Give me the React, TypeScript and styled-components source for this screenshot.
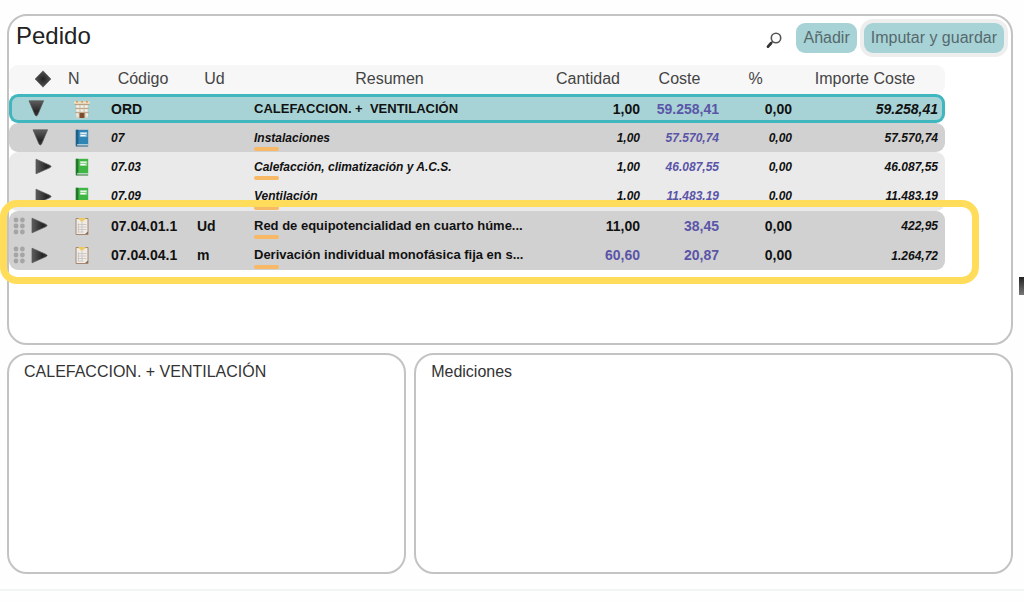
import React from "react";
import styled, { createGlobalStyle, css } from "styled-components";

const GlobalStyle = createGlobalStyle`
  * { box-sizing: border-box; }
  body {
    margin: 0;
    background: #fefefe;
    color: #333;
    font: 16px/20px "Liberation Sans", Arial, sans-serif;
  }
`;

const Page = styled.main`
  position: relative;
  display: flex;
  flex-direction: column;
  gap: 8px;
  padding: 14px 11px 15px 7px;
  border-bottom: 2px solid #f3f5f5;
  overflow: hidden;
`;

const Panel = styled.section`
  border: 2px solid #c3c3c3;
  border-radius: 20px;
  background: #fff;
`;

const OrderPanel = styled(Panel)`
  min-height: 331px;
`;

const DetailPanel = styled(Panel)`
  min-height: 221px;
  padding: 7px 15px;
`;

const Details = styled.div`
  display: grid;
  grid-template-columns: 2fr 3fr;
  gap: 8px;
`;

const DetailTitle = styled.h2`
  margin: 0;
  font-size: 16px;
  line-height: 20px;
  font-weight: 400;
`;

const Header = styled.header`
  display: flex;
  align-items: center;
  gap: 7px;
  height: 49px;
  padding: 0 7px 5px;
`;

const Title = styled.h1`
  flex: 1;
  margin: 0;
  padding-bottom: 4px;
  color: #222;
  font-size: 24px;
  line-height: 28px;
  font-weight: 400;
`;

const SearchButton = styled.button`
  display: flex;
  padding: 4px 7px 0 0;
  border: 0;
  background: none;
`;

const ActionButton = styled.button<{ $focused?: boolean }>`
  height: 30px;
  padding: 0 7px;
  border: 0;
  border-radius: 9px;
  background: #a7d3d6;
  color: #56696d;
  font: inherit;
  white-space: nowrap;
  ${(p) => p.$focused && css`box-shadow: 0 0 0 4px #eeeeee;`}
`;

const TableArea = styled.div`
  position: relative;
  margin-right: 66px;
`;

const Table = styled.table`
  width: 100%;
  table-layout: fixed;
  border-collapse: separate;
  border-spacing: 0;
`;

const Col = styled.col<{ $width?: number }>`
  width: ${(p) => (p.$width ? `${p.$width}px` : "auto")};
`;

const HeadCell = styled.th<{ $align?: string }>`
  height: 29px;
  padding: 0 0 2px;
  background: #f7f7f7;
  color: #444;
  font-weight: 400;
  line-height: 20px;
  text-align: ${(p) => p.$align ?? "center"};
  &:first-child { border-radius: 9px 0 0 9px; padding-left: 25px; }
  &:nth-child(2) { padding-left: 4px; }
  &:last-child { border-radius: 0 9px 9px 0; padding-right: 7px; }
`;

type Tone = "selected" | "dark" | "light";

const Group = styled.tbody<{ $tone: Tone }>`
  td { background: ${(p) => ({ selected: "#a7d3d6", dark: "#d1d1d1", light: "#eaeaea" })[p.$tone]}; }
  tr:nth-child(2) td { height: 30px; }
  tr:first-child td:first-child { border-top-left-radius: 9px; }
  tr:first-child td:last-child { border-top-right-radius: 9px; }
  tr:last-child td:first-child { border-bottom-left-radius: 9px; }
  tr:last-child td:last-child { border-bottom-right-radius: 9px; }
  ${(p) => p.$tone === "selected" && css`
    td { border: solid #40b6bf; border-width: 3px 0; }
    td:first-child { border-left-width: 3px; }
    td:last-child { border-right-width: 3px; }
  `}
`;

const Row = styled.tr<{ $chapter: boolean }>`
  color: #111;
  font-size: ${(p) => (p.$chapter ? 12 : 14)}px;
  font-style: ${(p) => (p.$chapter ? "italic" : "normal")};
  font-weight: 700;
  line-height: 16px;
`;

const Cell = styled.td`
  height: 29px;
  padding: 0 0 0 11px;
  white-space: pre;
`;

const TreeCell = styled(Cell)<{ $inset: number }>`
  padding-left: ${(p) => p.$inset}px;
`;

const TreeItems = styled.div`
  display: flex;
  align-items: center;
  gap: 6px;
`;

const IconCell = styled(Cell)`
  padding: 0;
  svg { display: block; margin: 0 auto; }
`;

const SummaryCell = styled(Cell)<{ $marked: boolean; $chapter: boolean }>`
  position: relative;
  overflow: hidden;
  text-overflow: ellipsis;
  font-size: ${(p) => (p.$chapter ? 12 : 13)}px;
  ${(p) => p.$marked && css`
    &::after {
      content: "";
      position: absolute;
      left: 11px;
      bottom: 1px;
      width: 25px;
      height: 4px;
      border-radius: 2px;
      background: #f8b966;
    }
  `}
`;

const NumberCell = styled(Cell)<{ $editable?: boolean }>`
  padding: 0;
  text-align: right;
  ${(p) => p.$editable && css`color: #5b55a8;`}
`;

const TotalCell = styled(NumberCell)<{ $inset: number }>`
  padding-right: ${(p) => p.$inset}px;
  font-style: italic;
`;

const SmallTotal = styled.span`
  font-size: 12px;
`;

const Highlight = styled.div`
  position: absolute;
  left: -9px;
  right: -34px;
  bottom: -14px;
  height: 84px;
  border: 7px solid #ffdd5a;
  border-radius: 17px;
  pointer-events: none;
`;

const EdgeHandle = styled.div`
  position: absolute;
  right: 0;
  top: 277px;
  width: 5px;
  height: 18px;
  background: linear-gradient(#222, #777);
`;

const Arrow = ({ open }: { open: boolean }) => (
  <svg width="17" height="17" viewBox="0 0 17 17">
    <defs>
      <linearGradient id={open ? "down" : "side"} x1="0" y1="0" x2={open ? 0 : 1} y2={open ? 1 : 0}>
        <stop offset="0" stopColor="#5e5e5e" />
        <stop offset="0.7" stopColor="#262626" />
        <stop offset="1" stopColor="#333" />
      </linearGradient>
    </defs>
    {open ? (
      <path d="M1 .8h14.6L9.6 15Q8.3 17 7 15Z" fill="url(#down)" stroke="#555" strokeWidth=".7" strokeLinejoin="round" />
    ) : (
      <path d="M1 1.2 15.2 7.4Q17 8.5 15.2 9.6L1 15.8Z" fill="url(#side)" stroke="#555" strokeWidth=".7" strokeLinejoin="round" />
    )}
  </svg>
);

const DiamondIcon = styled.svg`
  display: block;
`;

const Diamond = () => (
  <DiamondIcon width="18" height="18" viewBox="0 0 18 18">
    <defs>
      <radialGradient id="diamond">
        <stop offset="0" stopColor="#222" />
        <stop offset="1" stopColor="#555" />
      </radialGradient>
    </defs>
    <path d="M9 .8 17 9 9 17.2 1 9Z" fill="url(#diamond)" stroke="#555" strokeWidth=".5" strokeLinejoin="round" />
  </DiamondIcon>
);

const Grip = () => (
  <svg width="12" height="18" viewBox="0 0 12 18" fill="#a5a5a5">
    {[3, 9, 15].map((y) => (
      <React.Fragment key={y}>
        <circle cx="3" cy={y} r="2.4" />
        <circle cx="9.4" cy={y} r="2.4" />
      </React.Fragment>
    ))}
  </svg>
);

const Building = () => (
  <svg width="18" height="18" viewBox="0 0 18 18">
    <path d="M3 3h12v15H3z" fill="#d8d2c2" />
    <path d="M1 1.5h16v2.4H1z" fill="#eedfc2" />
    <path d="M3 1h2v1.6H3zM8 1h2v1.6H8zM13 1h2v1.6h-2z" fill="#d99a55" />
    <path d="M1.5 3.9h15v.9h-15z" fill="#b39778" />
    <path d="M2 8h14v.9H2zM2 12h14v.9H2z" fill="#bfa88c" />
    <path d="M3.5 5.5h2.5v2H3.5zM7.8 5.5h2.5v2H7.8zM12 5.5h2.5v2H12zM3.5 9.6h2.5v2H3.5zM7.8 9.6h2.5v2H7.8zM12 9.6h2.5v2H12z" fill="#f5f3ec" />
    <path d="M3.5 13.6h2v3h-2zM13 13.6h2v3h-2z" fill="#efece2" />
    <path d="M6.5 13h5v5h-5z" fill="#7d4c2c" />
  </svg>
);

const Book = ({ color, dark }: { color: string; dark: string }) => (
  <svg width="14" height="18" viewBox="0 0 14 18">
    <path d="M.8.8h12.4v15H.8z" fill={color} />
    <path d="M.8.8h2.6v16H.8z" fill={dark} />
    <path d="M4.8 3h7.4v5H4.8z" fill="#fff" opacity=".4" />
    <path d="M5.5 4.2h6M5.5 6.6h5" stroke="#fff" strokeWidth="1.1" />
    <path d="M2 15.3h11.2v1.4H2Z" fill="#d9e3e2" />
    <path d="M.8 17h12.4" stroke={dark} />
  </svg>
);

const Clipboard = () => (
  <svg width="14" height="18" viewBox="0 0 14 18">
    <path d="M1 1.5h12v16H1z" fill="#efece8" stroke="#a5886f" />
    <path d="M3.5 6.5v9M7 5v10.5M2.5 7.5h9M2.5 10h9M2.5 12.5h9M2.5 15h6" stroke="#c4c2c0" strokeWidth=".8" />
    <path d="M3.5 1h7v1.8H8.6v1.8H5.4V2.8H3.5z" fill="#ecc860" />
    <path d="M10 17h3v-2.5z" fill="#8b6b52" />
  </svg>
);

const Magnifier = () => (
  <svg width="16" height="17" viewBox="0 0 16 17" fill="none">
    <circle cx="10" cy="6" r="4.7" stroke="#555" strokeWidth="1.6" />
    <path d="M6.6 9.5 5 11" stroke="#444" strokeWidth="1.6" />
    <path d="M5 11.2 2 14.6" stroke="#333" strokeWidth="2.8" strokeLinecap="round" />
  </svg>
);

const icons = {
  building: <Building />,
  blueBook: <Book color="#2f86b5" dark="#1d5f86" />,
  greenBook: <Book color="#3fb543" dark="#24762c" />,
  clipboard: <Clipboard />,
};

type Item = {
  icon: keyof typeof icons;
  inset: number;
  open?: boolean;
  grip?: boolean;
  chapter?: boolean;
  code: string;
  unit?: string;
  summary: string;
  quantity: string;
  quantityEditable?: boolean;
  cost: string;
  total: string;
};

const groups: { tone: Tone; items: Item[] }[] = [
  {
    tone: "selected",
    items: [{ icon: "building", inset: 16, open: true, code: "ORD", summary: "CALEFACCION. +  VENTILACIÓN", quantity: "1,00", cost: "59.258,41", total: "59.258,41" }],
  },
  {
    tone: "dark",
    items: [{ icon: "blueBook", inset: 23, open: true, chapter: true, code: "07", summary: "Instalaciones", quantity: "1,00", cost: "57.570,74", total: "57.570,74" }],
  },
  {
    tone: "light",
    items: [
      { icon: "greenBook", inset: 26, chapter: true, code: "07.03", summary: "Calefacción, climatización y A.C.S.", quantity: "1,00", cost: "46.087,55", total: "46.087,55" },
      { icon: "greenBook", inset: 26, chapter: true, code: "07.09", summary: "Ventilación", quantity: "1,00", cost: "11.483,19", total: "11.483,19" },
    ],
  },
  {
    tone: "dark",
    items: [
      { icon: "clipboard", inset: 4, grip: true, code: "07.04.01.1", unit: "Ud", summary: "Red de equipotencialidad en cuarto húme...", quantity: "11,00", cost: "38,45", total: "422,95" },
      { icon: "clipboard", inset: 4, grip: true, code: "07.04.04.1", unit: "m", summary: "Derivación individual monofásica fija en s...", quantity: "60,60", quantityEditable: true, cost: "20,87", total: "1.264,72" },
    ],
  },
];

const ItemRow = ({ item, selected }: { item: Item; selected: boolean }) => (
  <Row $chapter={!!item.chapter}>
    <TreeCell $inset={item.inset}>
      <TreeItems>
        {item.grip && <Grip />}
        <Arrow open={!!item.open} />
      </TreeItems>
    </TreeCell>
    <IconCell>{icons[item.icon]}</IconCell>
    <Cell>{item.code}</Cell>
    <Cell>{item.unit}</Cell>
    <SummaryCell $marked={!selected} $chapter={!!item.chapter}>{item.summary}</SummaryCell>
    <NumberCell $editable={item.quantityEditable}>{item.quantity}</NumberCell>
    <NumberCell $editable>{item.cost}</NumberCell>
    <NumberCell>0,00</NumberCell>
    <TotalCell $inset={selected ? 4 : 7}>
      {item.grip ? <SmallTotal>{item.total}</SmallTotal> : item.total}
    </TotalCell>
  </Row>
);

export default function App() {
  return (
    <>
      <GlobalStyle />
      <Page>
        <OrderPanel>
          <Header>
            <Title>Pedido</Title>
            <SearchButton type="button" aria-label="Buscar"><Magnifier /></SearchButton>
            <ActionButton type="button">Añadir</ActionButton>
            <ActionButton type="button" $focused>Imputar y guardar</ActionButton>
          </Header>
          <TableArea>
            <Table>
              <colgroup>
                {[55, 36, 86, 57, undefined, 104, 79, 73, 153].map((width, i) => (
                  <Col key={i} $width={width} />
                ))}
              </colgroup>
              <thead>
                <tr>
                  <HeadCell><Diamond /></HeadCell>
                  <HeadCell $align="left">N</HeadCell>
                  <HeadCell>Código</HeadCell>
                  <HeadCell>Ud</HeadCell>
                  <HeadCell>Resumen</HeadCell>
                  <HeadCell>Cantidad</HeadCell>
                  <HeadCell>Coste</HeadCell>
                  <HeadCell>%</HeadCell>
                  <HeadCell>Importe Coste</HeadCell>
                </tr>
              </thead>
              {groups.map((group, i) => (
                <Group key={i} $tone={group.tone}>
                  {group.items.map((item) => (
                    <ItemRow key={item.code} item={item} selected={group.tone === "selected"} />
                  ))}
                </Group>
              ))}
            </Table>
            <Highlight />
          </TableArea>
        </OrderPanel>
        <Details>
          <DetailPanel>
            <DetailTitle>CALEFACCION. + VENTILACIÓN</DetailTitle>
          </DetailPanel>
          <DetailPanel>
            <DetailTitle>Mediciones</DetailTitle>
          </DetailPanel>
        </Details>
        <EdgeHandle />
      </Page>
    </>
  );
}
